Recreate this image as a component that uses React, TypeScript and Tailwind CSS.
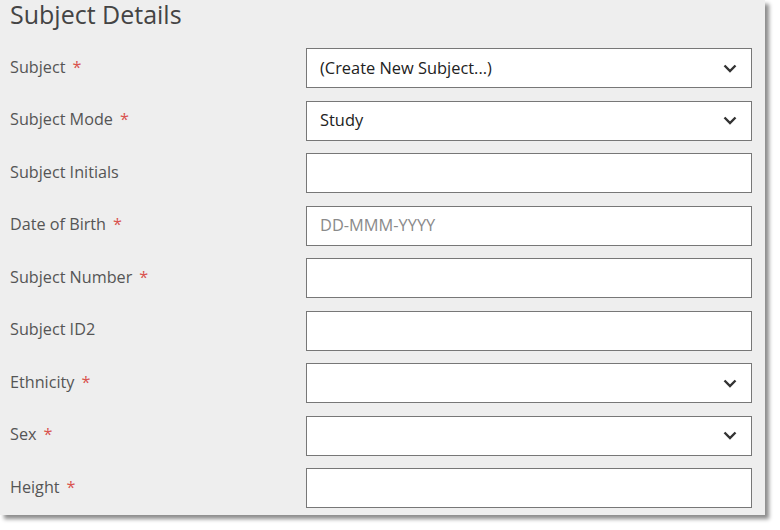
type Field = {
  label: string;
  required?: boolean;
  kind: 'select' | 'text';
  value?: string;
  placeholder?: string;
};

const fields: Field[] = [
  { label: 'Subject', required: true, kind: 'select', value: '(Create New Subject...)' },
  { label: 'Subject Mode', required: true, kind: 'select', value: 'Study' },
  { label: 'Subject Initials', kind: 'text' },
  { label: 'Date of Birth', required: true, kind: 'text', placeholder: 'DD-MMM-YYYY' },
  { label: 'Subject Number', required: true, kind: 'text' },
  { label: 'Subject ID2', kind: 'text' },
  { label: 'Ethnicity', required: true, kind: 'select' },
  { label: 'Sex', required: true, kind: 'select' },
  { label: 'Height', required: true, kind: 'text' },
];

function Chevron() {
  return (
    <svg width="14" height="9" viewBox="0 0 14 9" className="text-[#333333] mr-[1px]">
      <path d="M1.5 1.5 L7 7 L12.5 1.5" fill="none" stroke="currentColor" strokeWidth="2.4" />
    </svg>
  );
}

function App() {
  return (
    <div className="w-[780px] h-[530px] bg-white" style={{ fontFamily: '"Open Sans", sans-serif' }}>
      <div className="w-[765px] h-[515px] bg-[#eeeeee] shadow-[4px_4px_4px_rgba(0,0,0,0.45)] pl-[10px] pr-[13px]">
        <h2 className="text-[25px] leading-[28px] text-[#444444]">Subject Details</h2>
        <div className="flex flex-col gap-[12.5px] mt-[20px]">
          {fields.map((f) => (
            <div key={f.label} className="flex items-center h-10">
              <div className="w-[296px] text-[16.2px] text-[#555555] -mt-[2px]">
                {f.label}
                {f.required && <span className="text-[#d9534f] ml-[7px]">*</span>}
              </div>
              <div className="flex-1 h-10 bg-white border border-[#777777] flex items-center pl-[13px] pr-[13px]">
                <span className={`flex-1 text-[16.4px] ${f.placeholder ? 'text-[#8a8a8a]' : 'text-[#222222]'}`}>
                  {f.value ?? f.placeholder ?? ''}
                </span>
                {f.kind === 'select' && <Chevron />}
              </div>
            </div>
          ))}
        </div>
      </div>
    </div>
  );
}

export default App;
